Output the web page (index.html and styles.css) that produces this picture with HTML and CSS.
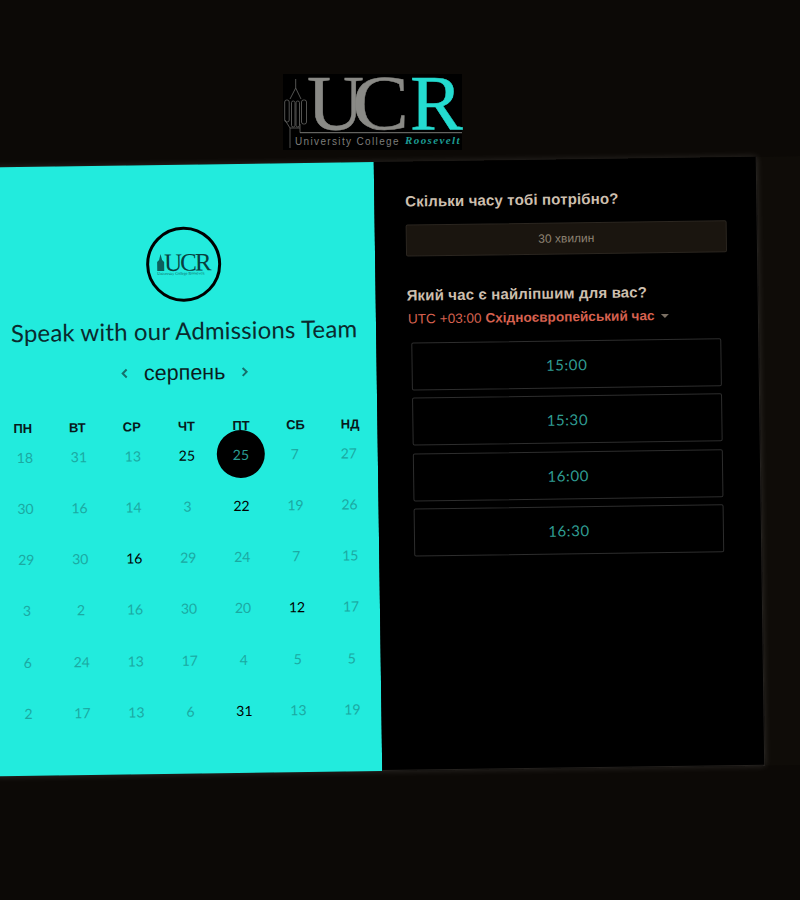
FILE: index.html
```html
<!DOCTYPE html>
<html lang="uk">
<head>
  <meta charset="UTF-8" />
  <meta name="viewport" content="width=device-width, initial-scale=1.0" />
  <title>Speak with our Admissions Team</title>
  <link rel="stylesheet" href="styles.css">
</head>
<body>
  <header class="top">
    <svg class="logo" width="179" height="76" viewBox="0 0 179 76" role="img" aria-label="UCR University College Roosevelt">
      <rect width="179" height="76" fill="#000"/>
      <g fill="none" stroke="#5c5c5a" stroke-width="0.9">
        <path d="M12.7 5V14M7 25L12.7 14L18 25"/>
        <rect x="1.7" y="26" width="4.5" height="22" rx="2"/>
        <rect x="18.5" y="26" width="5" height="24" rx="2"/>
        <rect x="8.5" y="27" width="3.5" height="26" rx="1.7"/>
        <rect x="13" y="27" width="3.5" height="26" rx="1.7"/>
        <path d="M2 46L7 54V74M7 54H17M17 50V58.7"/>
        <path d="M17 58.7H179" stroke="#7a7a77" stroke-width="1"/>
      </g>
      <text class="logo-big" x="24" y="55" fill="#8a8a86" stroke="#8a8a86">U</text>
      <text class="logo-big" transform="translate(69 55) scale(1.08 1)" fill="#8a8a86" stroke="#8a8a86">C</text>
      <text class="logo-big" x="127" y="55" fill="#24dcd0" stroke="#24dcd0">R</text>
      <text class="logo-sub" x="12" y="71" fill="#7d7d7a">University College</text>
      <text class="logo-rsv" x="122" y="70" fill="#1c9c94">Roosevelt</text>
    </svg>
  </header>

  <div class="stage">
    <main class="card">
      <section class="left">
        <div class="intro">
          <div class="avatar">
            <svg width="64" height="34" viewBox="0 0 64 34" aria-hidden="true">
              <path d="M6 23V14L8 12L9.5 6L11 12L13 14V23Z" fill="#0c5f5c"/>
              <text class="mini-big" x="13" y="23" fill="#08403f">UCR</text>
              <text class="mini-sub" x="6" y="27" fill="#0c5f5c">University College Roosevelt</text>
            </svg>
          </div>
          <h2 class="title">Speak with our Admissions Team</h2>
          <div class="month">
            <svg class="arrow" width="8" height="12" viewBox="0 0 8 12" aria-hidden="true"><path d="M6 2L2 6L6 10"/></svg>
            <span>серпень</span>
            <svg class="arrow" width="8" height="12" viewBox="0 0 8 12" aria-hidden="true"><path d="M2 2L6 6L2 10"/></svg>
          </div>
        </div>
        <div class="dows">
          <div class="dow">ПН</div><div class="dow">ВТ</div><div class="dow">СР</div><div class="dow">ЧТ</div><div class="dow">ПТ</div><div class="dow">СБ</div><div class="dow">НД</div>
        </div>
        <div class="days">
          <div class="day">18</div><div class="day">31</div><div class="day">13</div><div class="day on">25</div><div class="day"><span class="picked">25</span></div><div class="day">7</div><div class="day">27</div>
          <div class="day">30</div><div class="day">16</div><div class="day">14</div><div class="day">3</div><div class="day on">22</div><div class="day">19</div><div class="day">26</div>
          <div class="day">29</div><div class="day">30</div><div class="day on">16</div><div class="day">29</div><div class="day">24</div><div class="day">7</div><div class="day">15</div>
          <div class="day">3</div><div class="day">2</div><div class="day">16</div><div class="day">30</div><div class="day">20</div><div class="day on">12</div><div class="day">17</div>
          <div class="day">6</div><div class="day">24</div><div class="day">13</div><div class="day">17</div><div class="day">4</div><div class="day">5</div><div class="day">5</div>
          <div class="day">2</div><div class="day">17</div><div class="day">13</div><div class="day">6</div><div class="day on">31</div><div class="day">13</div><div class="day">19</div>
        </div>
      </section>

      <section class="right">
        <h3 class="label">Скільки часу тобі потрібно?</h3>
        <div class="duration">30 хвилин</div>
        <h3 class="label second">Який час є найліпшим для вас?</h3>
        <div class="zone">UTC +03:00 <b>Східноєвропейський час</b><span class="caret"></span></div>
        <div class="slots">
          <button class="slot">15:00</button>
          <button class="slot">15:30</button>
          <button class="slot">16:00</button>
          <button class="slot">16:30</button>
        </div>
      </section>
    </main>
  </div>
</body>
</html>
```
FILE: styles.css
```css
html, body {
  overflow: hidden;
}
body {
  margin: 0;
  height: 900px;
  background: #0c0906;
  font-family: "Liberation Sans", Arial, sans-serif;
}
.top {
  display: flex;
  justify-content: center;
  padding: 74px 55px 12px 0;
}
.logo {
  display: block;
  overflow: visible;
}
.logo-big {
  font-family: "Liberation Serif", serif;
  font-size: 79px;
  stroke-width: 0.5px;
}
.logo-sub {
  font-size: 10px;
  letter-spacing: 1.35px;
}
.logo-rsv {
  font-family: "Liberation Serif", serif;
  font-size: 11px;
  font-style: italic;
  font-weight: bold;
  letter-spacing: 1.4px;
}

/* the whole booking block sits slightly tilted */
.stage {
  width: 900px;
  margin-left: -8px;
  background: #0f0c08;
  transform: rotate(-0.8deg);
  transform-origin: 388px 305px;
}
.card {
  display: flex;
  width: 769px;
  height: 609px;
  box-shadow: 0 0 7px rgba(255, 255, 255, 0.14);
}
.left {
  box-sizing: border-box;
  width: 386px;
  padding: 62px 0 0 4px;
  background: #22ebdd;
  color: #000;
}
.intro {
  padding-right: 2px;
}
.avatar {
  display: flex;
  align-items: center;
  justify-content: center;
  box-sizing: border-box;
  width: 75px;
  height: 75px;
  margin: 0 auto;
  border: 3px solid #000;
  border-radius: 50%;
}
.avatar svg {
  flex: none;
}
.mini-big {
  font-family: "Liberation Serif", serif;
  font-size: 25px;
  letter-spacing: -2px;
}
.mini-sub {
  font-family: "Liberation Serif", serif;
  font-size: 4px;
}
.title {
  margin: 14px 0 0;
  font-family: Lato, sans-serif;
  font-size: 24px;
  font-weight: 400;
  letter-spacing: 0.15px;
  line-height: 30px;
  text-align: center;
  color: #0a2a2e;
}
.month {
  display: flex;
  justify-content: center;
  align-items: center;
  gap: 15px;
  height: 24px;
  margin-top: 15px;
  font-size: 21.5px;
  color: #0b1c1e;
}
.arrow {
  fill: none;
  stroke: #16706c;
  stroke-width: 2;
}
.dows, .days {
  display: grid;
  grid-template-columns: repeat(7, 1fr);
}
.dows {
  grid-auto-rows: 20px;
  margin-top: 31px;
}
.days {
  grid-auto-rows: 38px;
  row-gap: 13.3px;
  padding: 0 2px;
}
.dow {
  display: flex;
  align-items: center;
  justify-content: center;
  font-size: 13px;
  font-weight: bold;
  color: #08191b;
}
.day {
  display: flex;
  align-items: center;
  justify-content: center;
  font-family: Lato, sans-serif;
  font-size: 14px;
  color: #1ba9a2;
}
.day.on {
  color: #000;
}
.picked {
  display: flex;
  flex: none;
  align-items: center;
  justify-content: center;
  width: 48px;
  height: 48px;
  border-radius: 50%;
  background: #000;
  color: #2a9d94;
}
.right {
  box-sizing: border-box;
  width: 383px;
  padding: 30px 30px 0 31px;
  background: #000;
  border-right: 1px solid #24211e;
  border-bottom: 1px solid #24211e;
}
.label {
  margin: 0;
  font-size: 15px;
  letter-spacing: 0.15px;
  line-height: 20px;
  color: #cdbfae;
}
.label.second {
  margin-top: 29px;
}
.duration {
  box-sizing: border-box;
  height: 32px;
  margin-top: 13px;
  border: 1px solid #2b2620;
  border-radius: 2px;
  background: #1a150f;
  font-size: 12px;
  line-height: 30px;
  text-align: center;
  color: #8e8373;
}
.zone {
  margin-top: 4px;
  padding-left: 1px;
  font-size: 13.6px;
  line-height: 20px;
  color: #d6614f;
}
.caret {
  display: inline-block;
  margin-left: 6px;
  vertical-align: 2px;
  border-top: 4px solid #7a6f63;
  border-left: 4px solid transparent;
  border-right: 4px solid transparent;
}
.slots {
  display: flex;
  flex-direction: column;
  gap: 7.3px;
  margin: 13px 7px 0 4px;
}
.slot {
  height: 48px;
  padding: 0;
  border: 1px solid #2d2d2d;
  border-radius: 2px;
  background: #000;
  font-family: Lato, sans-serif;
  font-size: 15px;
  letter-spacing: 0.6px;
  color: #2f9c92;
}
```
